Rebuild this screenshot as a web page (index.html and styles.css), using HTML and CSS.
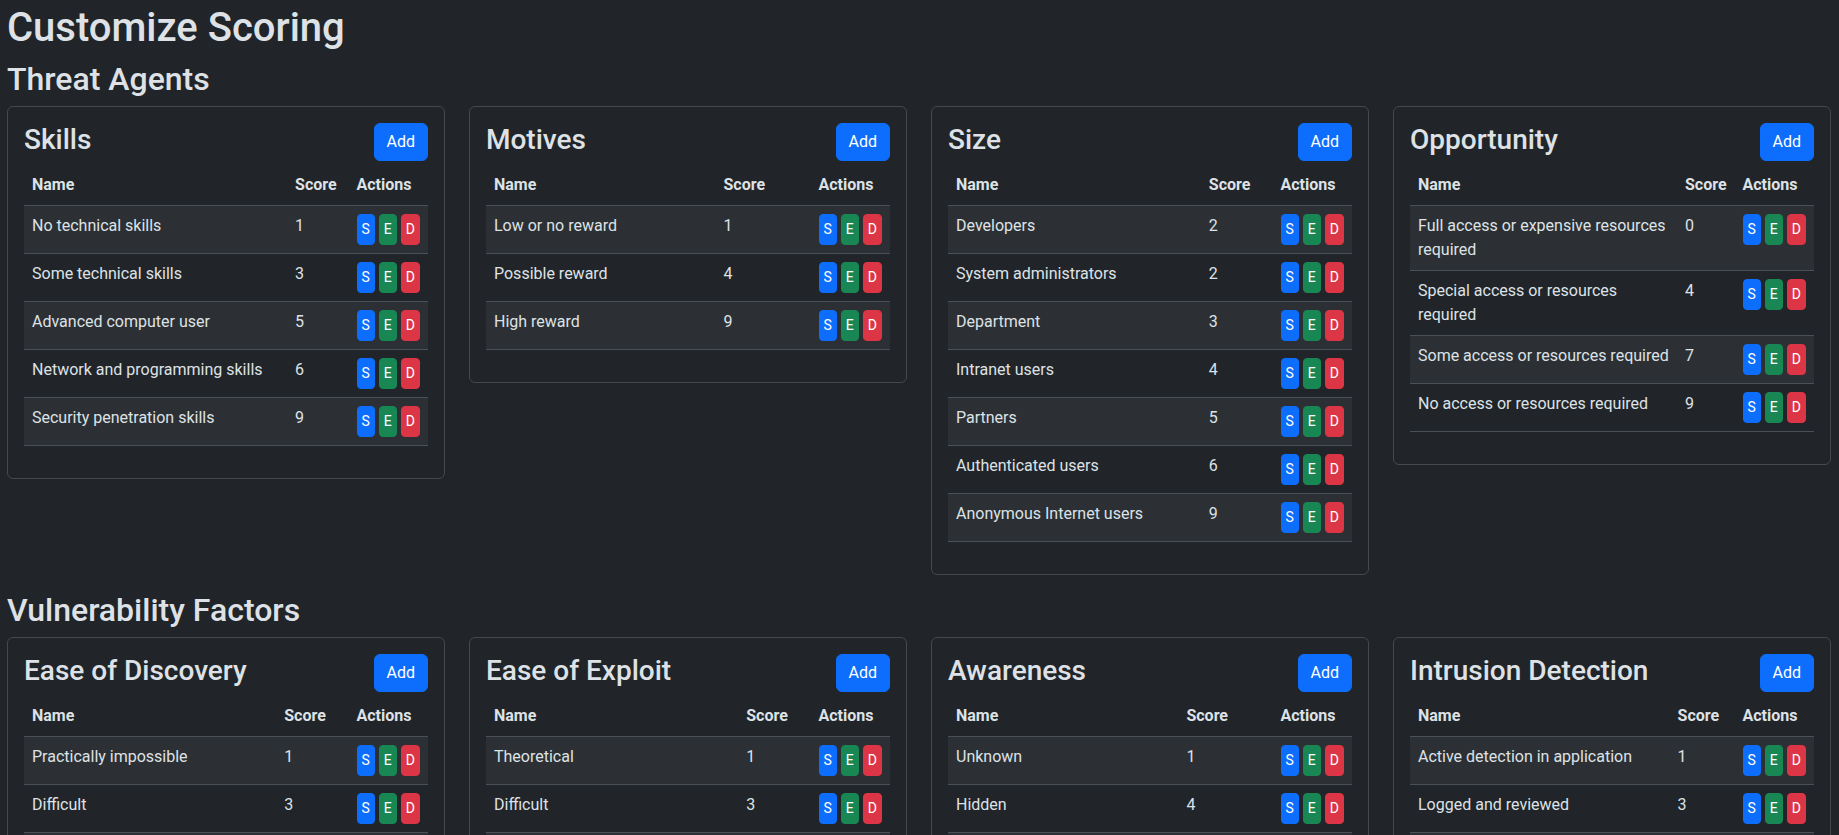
FILE: index.html
```html
<!DOCTYPE html>
<html lang="en">
<head>
<meta charset="utf-8">
<title>Customize Scoring</title>
<link rel="stylesheet" href="styles.css">
</head>
<body>
<main class="page">
  <h1 class="page-title">Customize Scoring</h1>

  <h2 class="section-title">Threat Agents</h2>
  <div class="card-grid">
    <div class="card">
      <div class="card-head"><h3 class="card-title">Skills</h3><button class="btn btn-add">Add</button></div>
      <table class="tbl">
        <thead><tr><th>Name</th><th>Score</th><th class="acts">Actions</th></tr></thead>
        <tbody>
          <tr><td>No technical skills</td><td>1</td><td class="acts"><span class="b b-s">S</span><span class="b b-e">E</span><span class="b b-d">D</span></td></tr>
          <tr><td>Some technical skills</td><td>3</td><td class="acts"><span class="b b-s">S</span><span class="b b-e">E</span><span class="b b-d">D</span></td></tr>
          <tr><td>Advanced computer user</td><td>5</td><td class="acts"><span class="b b-s">S</span><span class="b b-e">E</span><span class="b b-d">D</span></td></tr>
          <tr><td>Network and programming skills</td><td>6</td><td class="acts"><span class="b b-s">S</span><span class="b b-e">E</span><span class="b b-d">D</span></td></tr>
          <tr><td>Security penetration skills</td><td>9</td><td class="acts"><span class="b b-s">S</span><span class="b b-e">E</span><span class="b b-d">D</span></td></tr>
        </tbody>
      </table>
    </div>

    <div class="card">
      <div class="card-head"><h3 class="card-title">Motives</h3><button class="btn btn-add">Add</button></div>
      <table class="tbl">
        <thead><tr><th>Name</th><th>Score</th><th class="acts">Actions</th></tr></thead>
        <tbody>
          <tr><td>Low or no reward</td><td>1</td><td class="acts"><span class="b b-s">S</span><span class="b b-e">E</span><span class="b b-d">D</span></td></tr>
          <tr><td>Possible reward</td><td>4</td><td class="acts"><span class="b b-s">S</span><span class="b b-e">E</span><span class="b b-d">D</span></td></tr>
          <tr><td>High reward</td><td>9</td><td class="acts"><span class="b b-s">S</span><span class="b b-e">E</span><span class="b b-d">D</span></td></tr>
        </tbody>
      </table>
    </div>

    <div class="card">
      <div class="card-head"><h3 class="card-title">Size</h3><button class="btn btn-add">Add</button></div>
      <table class="tbl">
        <thead><tr><th>Name</th><th>Score</th><th class="acts">Actions</th></tr></thead>
        <tbody>
          <tr><td>Developers</td><td>2</td><td class="acts"><span class="b b-s">S</span><span class="b b-e">E</span><span class="b b-d">D</span></td></tr>
          <tr><td>System administrators</td><td>2</td><td class="acts"><span class="b b-s">S</span><span class="b b-e">E</span><span class="b b-d">D</span></td></tr>
          <tr><td>Department</td><td>3</td><td class="acts"><span class="b b-s">S</span><span class="b b-e">E</span><span class="b b-d">D</span></td></tr>
          <tr><td>Intranet users</td><td>4</td><td class="acts"><span class="b b-s">S</span><span class="b b-e">E</span><span class="b b-d">D</span></td></tr>
          <tr><td>Partners</td><td>5</td><td class="acts"><span class="b b-s">S</span><span class="b b-e">E</span><span class="b b-d">D</span></td></tr>
          <tr><td>Authenticated users</td><td>6</td><td class="acts"><span class="b b-s">S</span><span class="b b-e">E</span><span class="b b-d">D</span></td></tr>
          <tr><td>Anonymous Internet users</td><td>9</td><td class="acts"><span class="b b-s">S</span><span class="b b-e">E</span><span class="b b-d">D</span></td></tr>
        </tbody>
      </table>
    </div>

    <div class="card">
      <div class="card-head"><h3 class="card-title">Opportunity</h3><button class="btn btn-add">Add</button></div>
      <table class="tbl">
        <thead><tr><th>Name</th><th>Score</th><th class="acts">Actions</th></tr></thead>
        <tbody>
          <tr><td>Full access or expensive resources required</td><td>0</td><td class="acts"><span class="b b-s">S</span><span class="b b-e">E</span><span class="b b-d">D</span></td></tr>
          <tr><td>Special access or resources required</td><td>4</td><td class="acts"><span class="b b-s">S</span><span class="b b-e">E</span><span class="b b-d">D</span></td></tr>
          <tr><td>Some access or resources required</td><td>7</td><td class="acts"><span class="b b-s">S</span><span class="b b-e">E</span><span class="b b-d">D</span></td></tr>
          <tr><td>No access or resources required</td><td>9</td><td class="acts"><span class="b b-s">S</span><span class="b b-e">E</span><span class="b b-d">D</span></td></tr>
        </tbody>
      </table>
    </div>
  </div>

  <h2 class="section-title">Vulnerability Factors</h2>
  <div class="card-grid">
    <div class="card">
      <div class="card-head"><h3 class="card-title">Ease of Discovery</h3><button class="btn btn-add">Add</button></div>
      <table class="tbl">
        <thead><tr><th>Name</th><th>Score</th><th class="acts">Actions</th></tr></thead>
        <tbody>
          <tr><td>Practically impossible</td><td>1</td><td class="acts"><span class="b b-s">S</span><span class="b b-e">E</span><span class="b b-d">D</span></td></tr>
          <tr><td>Difficult</td><td>3</td><td class="acts"><span class="b b-s">S</span><span class="b b-e">E</span><span class="b b-d">D</span></td></tr>
          <tr><td>Easy</td><td>7</td><td class="acts"><span class="b b-s">S</span><span class="b b-e">E</span><span class="b b-d">D</span></td></tr>
          <tr><td>Automated tools available</td><td>9</td><td class="acts"><span class="b b-s">S</span><span class="b b-e">E</span><span class="b b-d">D</span></td></tr>
        </tbody>
      </table>
    </div>

    <div class="card">
      <div class="card-head"><h3 class="card-title">Ease of Exploit</h3><button class="btn btn-add">Add</button></div>
      <table class="tbl">
        <thead><tr><th>Name</th><th>Score</th><th class="acts">Actions</th></tr></thead>
        <tbody>
          <tr><td>Theoretical</td><td>1</td><td class="acts"><span class="b b-s">S</span><span class="b b-e">E</span><span class="b b-d">D</span></td></tr>
          <tr><td>Difficult</td><td>3</td><td class="acts"><span class="b b-s">S</span><span class="b b-e">E</span><span class="b b-d">D</span></td></tr>
          <tr><td>Easy</td><td>5</td><td class="acts"><span class="b b-s">S</span><span class="b b-e">E</span><span class="b b-d">D</span></td></tr>
          <tr><td>Automated tools available</td><td>9</td><td class="acts"><span class="b b-s">S</span><span class="b b-e">E</span><span class="b b-d">D</span></td></tr>
        </tbody>
      </table>
    </div>

    <div class="card">
      <div class="card-head"><h3 class="card-title">Awareness</h3><button class="btn btn-add">Add</button></div>
      <table class="tbl">
        <thead><tr><th>Name</th><th>Score</th><th class="acts">Actions</th></tr></thead>
        <tbody>
          <tr><td>Unknown</td><td>1</td><td class="acts"><span class="b b-s">S</span><span class="b b-e">E</span><span class="b b-d">D</span></td></tr>
          <tr><td>Hidden</td><td>4</td><td class="acts"><span class="b b-s">S</span><span class="b b-e">E</span><span class="b b-d">D</span></td></tr>
          <tr><td>Obvious</td><td>6</td><td class="acts"><span class="b b-s">S</span><span class="b b-e">E</span><span class="b b-d">D</span></td></tr>
          <tr><td>Public knowledge</td><td>9</td><td class="acts"><span class="b b-s">S</span><span class="b b-e">E</span><span class="b b-d">D</span></td></tr>
        </tbody>
      </table>
    </div>

    <div class="card">
      <div class="card-head"><h3 class="card-title">Intrusion Detection</h3><button class="btn btn-add">Add</button></div>
      <table class="tbl">
        <thead><tr><th>Name</th><th>Score</th><th class="acts">Actions</th></tr></thead>
        <tbody>
          <tr><td>Active detection in application</td><td>1</td><td class="acts"><span class="b b-s">S</span><span class="b b-e">E</span><span class="b b-d">D</span></td></tr>
          <tr><td>Logged and reviewed</td><td>3</td><td class="acts"><span class="b b-s">S</span><span class="b b-e">E</span><span class="b b-d">D</span></td></tr>
          <tr><td>Logged without review</td><td>8</td><td class="acts"><span class="b b-s">S</span><span class="b b-e">E</span><span class="b b-d">D</span></td></tr>
          <tr><td>Not logged</td><td>9</td><td class="acts"><span class="b b-s">S</span><span class="b b-e">E</span><span class="b b-d">D</span></td></tr>
        </tbody>
      </table>
    </div>
  </div>
</main>
</body>
</html>
```

FILE: styles.css
```css
html, body {
  margin: 0;
  padding: 0;
  background: #212529;
}

body {
  font-family: Roboto, "Noto Sans", "Liberation Sans", sans-serif;
  font-size: 16px;
  line-height: 1.5;
  color: #dee2e6;
}

.page {
  padding: 4px 8px 0 7px;
}

.page-title,
.section-title,
.card-title {
  font-weight: 500;
  line-height: 1.2;
  margin: 0 0 8px 0;
  color: #dee2e6;
}

.page-title { font-size: 40px; }
.section-title { font-size: 32px; }
.card-title { font-size: 28px; }

.card-grid {
  display: grid;
  grid-template-columns: repeat(4, minmax(0, 1fr));
  column-gap: 24px;
  align-items: start;
}

.card {
  background: #212529;
  border: 1px solid #45494e;
  border-radius: 6px;
  padding: 16px;
  margin-bottom: 16px;
  min-width: 0;
}

.card-head {
  display: flex;
  justify-content: space-between;
  align-items: flex-start;
}

.btn {
  font-family: inherit;
  font-size: 16px;
  line-height: 24px;
  border-radius: 6px;
  border: 1px solid transparent;
  cursor: pointer;
}

.btn-add {
  background: #0d6efd;
  border-color: #0d6efd;
  color: #ffffff;
  padding: 6px 12px;
}

.tbl {
  width: 100%;
  border-collapse: collapse;
  margin-bottom: 16px;
  vertical-align: top;
  color: #dee2e6;
}

.tbl th,
.tbl td {
  padding: 8px;
  border-bottom: 1px solid #495057;
  text-align: left;
  vertical-align: top;
}

.tbl th {
  font-weight: 700;
}

.tbl tbody tr:nth-child(odd) td {
  background: #2c3034;
}

.tbl .acts {
  white-space: nowrap;
  width: 1%;
}

.b {
  display: inline-block;
  font-size: 14px;
  line-height: 21px;
  padding: 4px 4px;
  border: 1px solid transparent;
  border-radius: 4px;
  color: #ffffff;
  margin-right: 4px;
}

.b:last-child { margin-right: 0; }

.b-s { background: #0d6efd; border-color: #0d6efd; }
.b-e { background: #198754; border-color: #198754; }
.b-d { background: #dc3545; border-color: #dc3545; }
```
